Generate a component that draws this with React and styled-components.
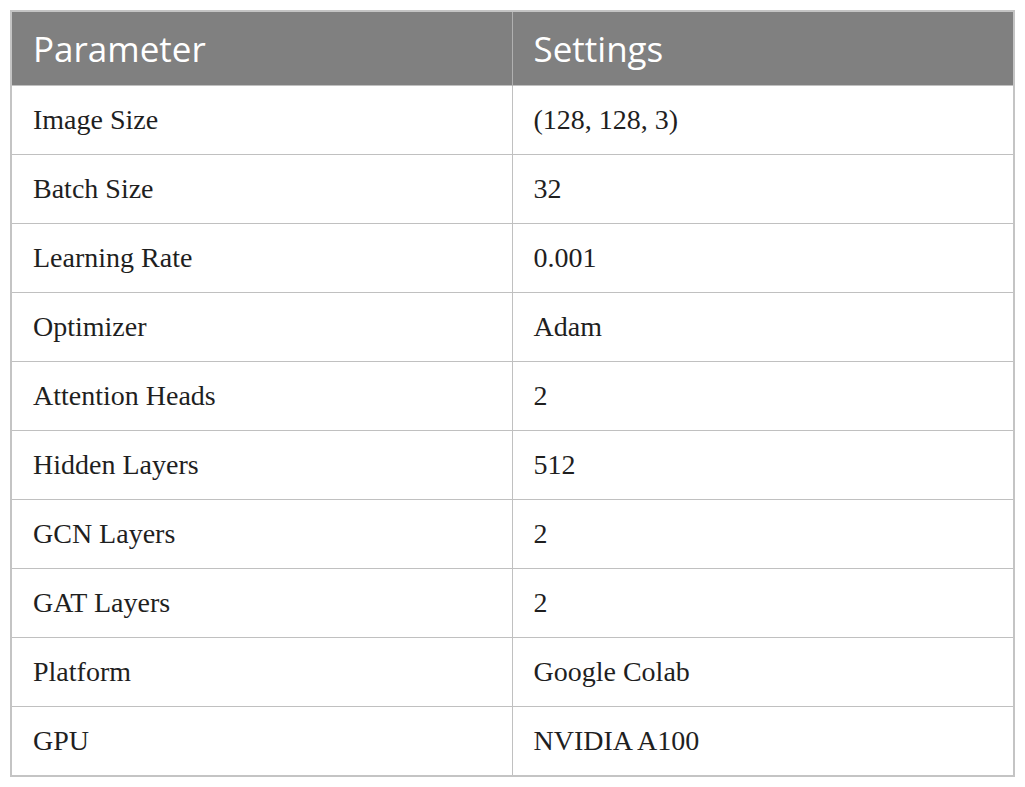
import React from "react";
import styled, { createGlobalStyle } from "styled-components";

const GlobalStyle = createGlobalStyle`
  html, body {
    margin: 0;
    padding: 0;
    background: #ffffff;
  }
`;

const Page = styled.div`
  padding: 10px 10px 0 10px;
`;

const Table = styled.table`
  width: 1005px;
  border-collapse: collapse;
  table-layout: fixed;
  border: 2px solid #c4c4c4;
`;

const HeadCell = styled.th`
  height: 73px;
  padding: 0 0 0 21px;
  background-color: #808080;
  color: #ffffff;
  font-family: "Open Sans", sans-serif;
  font-weight: 400;
  font-size: 35px;
  text-align: left;
  border-left: 1px solid #b0b0b0;
`;

const Cell = styled.td`
  height: 68px;
  padding: 0 0 0 21px;
  font-family: "Liberation Serif", serif;
  font-size: 28px;
  color: #1f1f1f;
  border-top: 1px solid #c0c0c0;
  border-left: 1px solid #c0c0c0;
`;

const rows = [
  ["Image Size", "(128, 128, 3)"],
  ["Batch Size", "32"],
  ["Learning Rate", "0.001"],
  ["Optimizer", "Adam"],
  ["Attention Heads", "2"],
  ["Hidden Layers", "512"],
  ["GCN Layers", "2"],
  ["GAT Layers", "2"],
  ["Platform", "Google Colab"],
  ["GPU", "NVIDIA A100"],
];

const App = () => {
  return (
    <Page>
      <GlobalStyle />
      <Table>
        <colgroup>
          <col style={{ width: "501px" }} />
          <col />
        </colgroup>
        <thead>
          <tr>
            <HeadCell>Parameter</HeadCell>
            <HeadCell>Settings</HeadCell>
          </tr>
        </thead>
        <tbody>
          {rows.map(([name, value]) => (
            <tr key={name}>
              <Cell>{name}</Cell>
              <Cell>{value}</Cell>
            </tr>
          ))}
        </tbody>
      </Table>
    </Page>
  );
};

export default App;
